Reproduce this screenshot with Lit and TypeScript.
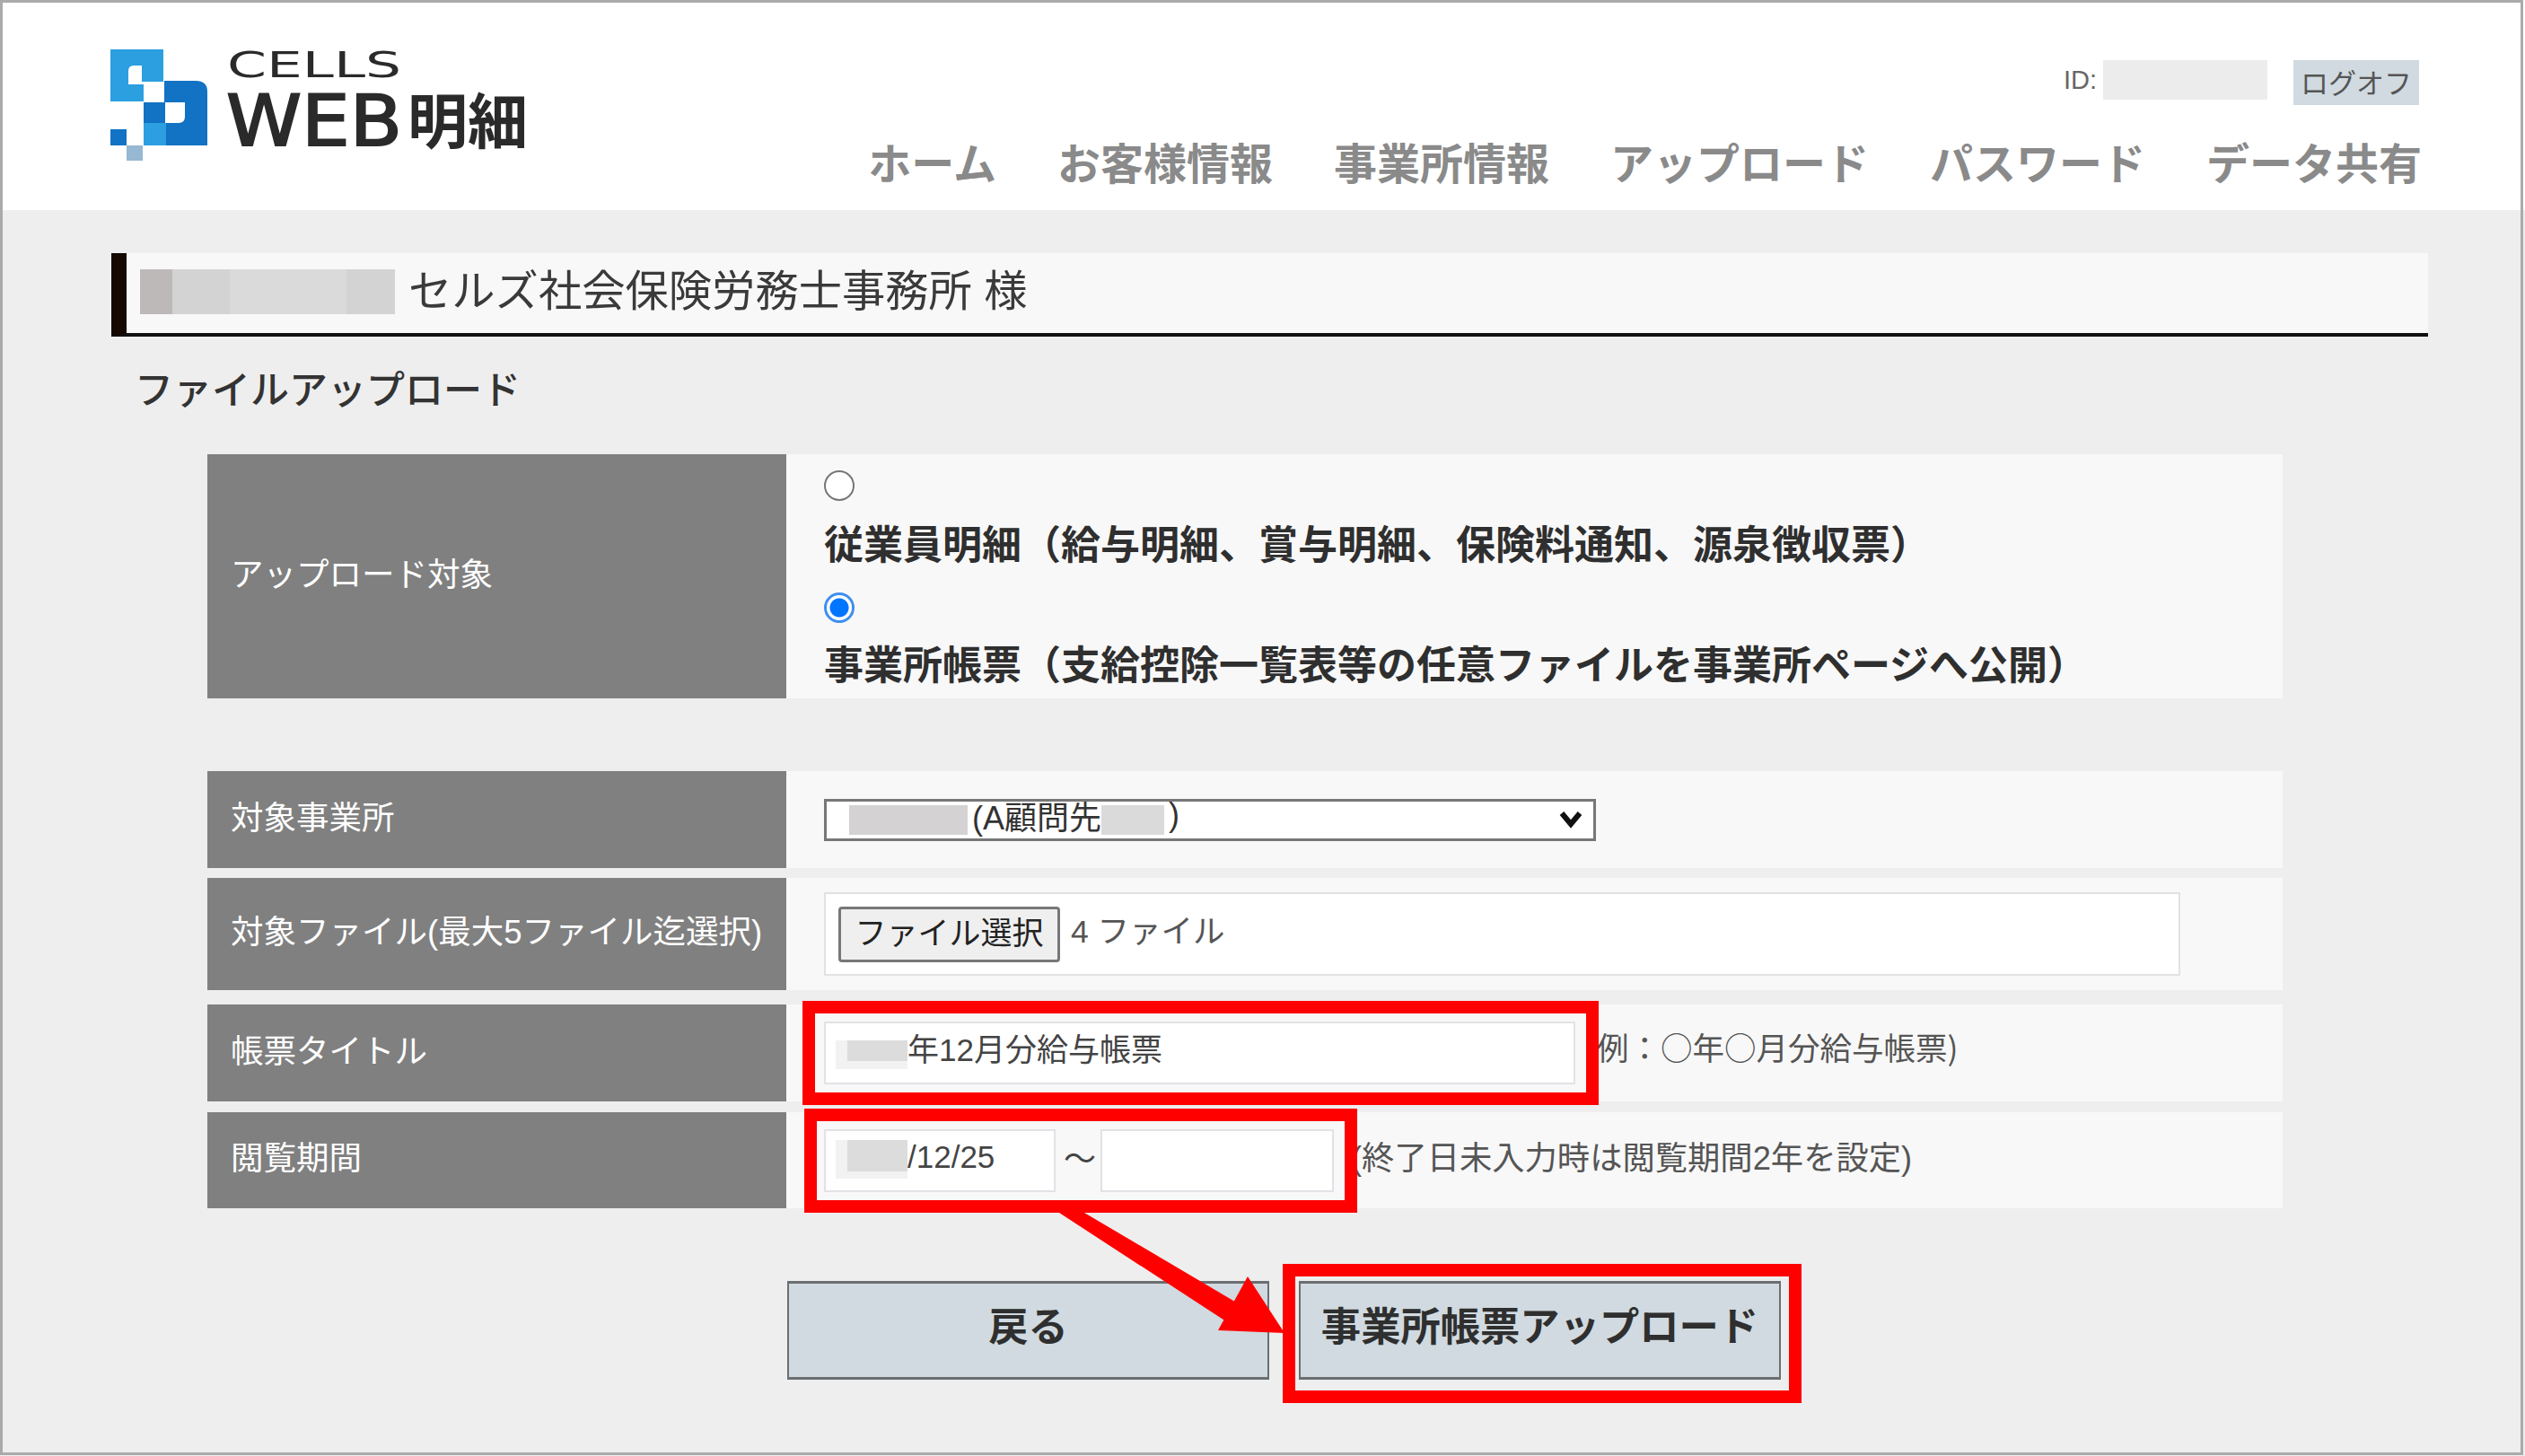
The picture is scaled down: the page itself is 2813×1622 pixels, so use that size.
import { LitElement, html, css, svg } from "lit";
import { customElement } from "lit/decorators.js";

const NAV = ["ホーム", "お客様情報", "事業所情報", "アップロード", "パスワード", "データ共有"];

@customElement("app-root")
export class AppRoot extends LitElement {
  static styles = css`
    :host {
      display: block;
      position: relative;
      width: 2813px;
      height: 1622px;
      overflow: hidden;
      background: #eeeeee;
      color: #333;
      font-family: "Liberation Sans", "Noto Sans CJK JP", sans-serif;
    }
    * { box-sizing: border-box; }
    header {
      height: 234px;
      background: #fff;
      display: flex;
      justify-content: space-between;
      padding: 54px 115px 0 123px;
    }
    .logo { display: block; width: 470px; height: 126px; overflow: visible; }
    .logo text { fill: #2a2a2a; }
    .head-right { display: flex; flex-direction: column; align-items: flex-end; padding-top: 13px; }
    .account { display: flex; align-items: flex-start; height: 50px; margin-right: 3px; font-size: 29px; color: #666; line-height: 44px; }
    .id-blur { width: 183px; height: 44px; background: #ececec; margin: 0 29px 0 0; }
    .id-text { width: 44px; white-space: nowrap; }
    .logoff { width: 140px; height: 50px; background: #d0dae0; color: #555; font-size: 31px; line-height: 54px; text-align: center; }
    nav { display: flex; gap: 68px; margin-top: 37px; font-size: 48px; font-weight: 700; color: #8a8a8a; line-height: 60px; }
    main { padding: 48px 108px 0 124px; }
    .title-bar {
      height: 93px;
      border-left: 17px solid #140800;
      border-bottom: 4px solid #111;
      background: #f8f8f8;
      display: flex;
      align-items: center;
      padding: 0 0 6px 15px;
      font-size: 48.3px;
      color: #3a3a3a;
      line-height: 60px;
      white-space: pre;
    }
    .name-blur { width: 284px; height: 50px; margin: 2px 15px 0 0; background: linear-gradient(90deg, #bdb9b8 0 36px, #d3d3d3 36px 100px, #dadada 100px 230px, #d3d3d3 230px); }
    h1 { margin: 29px 0 0 26px; height: 66px; font-size: 43px; line-height: 62px; font-weight: 500; color: #333; }
    .form { margin: 36px 0 0 107px; width: 2312px; }
    .row { display: grid; grid-template-columns: 645px 1fr; background: #f8f8f8; }
    .row > .label { background: #808080; color: #fff; font-size: 36.5px; display: flex; align-items: center; padding: 0 0 10px 26px; white-space: nowrap; }
    .row > .value { display: flex; align-items: center; padding-left: 42px; min-width: 0; white-space: nowrap; }
    .r-target { height: 272px; }
    .r-office { height: 108px; margin-top: 81px; }
    .r-file { height: 125px; margin-top: 11px; }
    .r-title { height: 108px; margin-top: 16px; }
    .r-period { height: 107px; margin-top: 12px; }
    .targets { flex-direction: column; align-items: flex-start !important; padding-top: 18px; }
    .targets input {
      appearance: none;
      display: block;
      width: 34px; height: 34px; margin: 0;
      border: 2.5px solid #767676;
      border-radius: 50%;
      background: #fff;
    }
    .targets input:checked {
      border: 3px solid #3d8ff0;
      background: radial-gradient(circle, #0075ff 0 10px, #fff 11px);
    }
    .targets .opt2 { font-size: 44px; font-weight: 700; line-height: 62px; margin-top: 17px; color: #2f2f2f; }
    .targets .opt1 { font-size: 44px; font-weight: 700; line-height: 62px; margin-top: 19px; height: 83px; color: #2f2f2f; }
    .select {
      width: 860px; height: 47px;
      background: #fff;
      border: 3px solid #777;
      display: flex; align-items: center;
      padding: 0 12px 0 25px;
      font-size: 36px; color: #333;
    }
    .select .tx { margin-bottom: 10px; }
    .blur-a { width: 132px; height: 33px; background: #d4d2d2; margin-right: 5px; }
    .blur-b { width: 70px; height: 33px; background: #dadada; margin-right: 5px; }
    .chev { margin-left: auto; width: 26px; height: 20px; display: block; }
    .file {
      width: 1511px; height: 93px;
      background: #fff;
      border: 2px solid #e2e2e6;
      display: flex; align-items: center;
      padding-left: 14px;
      font-size: 35.5px; color: #555;
    }
    .file .tx { margin-bottom: 12px; }
    .file-btn {
      width: 247px; height: 62px;
      background: #efefef;
      border: 3px solid #777;
      border-radius: 4px;
      font-size: 35px; color: #222;
      display: flex; align-items: center; justify-content: center;
      padding-bottom: 8px;
      margin-right: 12px;
    }
    .input {
      height: 70px;
      background: #fff;
      border: 2px solid #e2e2e6;
      display: flex; align-items: center;
      padding-left: 11px;
      font-size: 35px; color: #444;
    }
    .input.wide { width: 837px; }
    .input.wide .tx { margin-bottom: 14px; }
    .input.date { width: 258px; }
    .input.date .tx { margin-bottom: 8px; }
    .input.date.end { width: 260px; }
    .in-blur { width: 80px; height: 32px; margin-top: 4px; background: linear-gradient(#dcdcdc, #dcdcdc) 13px 0 / 100% 23px no-repeat, #f2f2f2; }
    .in-blur.tall { height: 43px; margin-top: -3px; background: linear-gradient(#dcdcdc, #dcdcdc) 13px 0 / 100% 35px no-repeat, #f2f2f2; }
    .tilde { width: 50px; padding-left: 4px; text-align: center; font-size: 36px; color: #444; margin-bottom: 10px; }
    .hint { font-family: "Noto Sans CJK JP", sans-serif; font-size: 35.5px; color: #555; margin: 0 0 16px 12px; }
    .hint.period { font-family: inherit; font-size: 36.3px; margin: 0 0 12px 19px; }
    .actions { display: flex; gap: 33px; margin: 81px 0 0 753px; }
    .btn {
      width: 537px; height: 110px;
      background: #d0dae0;
      border: 3px solid #6b6f72;
      border-left-width: 2px; border-right-width: 2px;
      font-size: 44.3px; font-weight: 700; color: #2f2f2f;
      display: flex; align-items: center; justify-content: center;
      padding-bottom: 14px;
    }
    .overlay { position: absolute; left: 0; top: 0; width: 2813px; height: 1622px; pointer-events: none; }
  `;

  private renderLogo() {
    return html`<svg class="logo" viewBox="0 0 470 126" aria-label="CELLS WEB明細">
      <rect x="0" y="1" width="59" height="58" fill="#2b9fe0"></rect>
      <path d="M60 36H95Q108 36 108 48V108H37V60H60Z" fill="#1272c4"></path>
      <rect x="37" y="83" width="25" height="25" fill="#2b9fe0"></rect>
      <rect x="0" y="90" width="18" height="18" fill="#1272c4"></rect>
      <rect x="18" y="108" width="18" height="17" fill="#96b8d2"></rect>
      <path d="M20 25Q20 19 26 19H35V37H60V60H83V76Q83 83 76 83H61V60H37V40H20Z" fill="#fff"></path>
      <text x="130" y="32" font-family="DejaVu Sans" font-size="39" textLength="194" lengthAdjust="spacingAndGlyphs">CELLS</text>
      <text x="129" y="108" font-family="DejaVu Sans" font-size="78" font-weight="400" stroke="#2a2a2a" stroke-width="2" textLength="196" lengthAdjust="spacingAndGlyphs">WEB</text>
      <text x="331" y="106" font-family="Noto Sans CJK JP" font-size="67" font-weight="700" textLength="134" lengthAdjust="spacingAndGlyphs">明細</text>
    </svg>`;
  }

  private renderOverlay() {
    const red = "#ff0000";
    return html`<svg class="overlay" viewBox="0 0 2813 1622">
      ${svg`
        <rect x="1.5" y="1.5" width="2808" height="1618" fill="none" stroke="#aaaaaa" stroke-width="3"></rect>
        <rect x="901" y="1122" width="873" height="102" fill="none" stroke="${red}" stroke-width="14"></rect>
        <rect x="903" y="1242" width="602" height="102" fill="none" stroke="${red}" stroke-width="14"></rect>
        <rect x="1436" y="1415" width="564" height="141" fill="none" stroke="${red}" stroke-width="14"></rect>
        <path d="M1180 1351H1208L1396 1462 1372 1476Z" fill="${red}"></path>
        <polygon points="1390,1422 1357,1482 1431,1485" fill="${red}"></polygon>
      `}
    </svg>`;
  }

  render() {
    return html`
      <header>
        ${this.renderLogo()}
        <div class="head-right">
          <div class="account">
            <span class="id-text">ID:</span><span class="id-blur"></span>
            <span class="logoff">ログオフ</span>
          </div>
          <nav>${NAV.map((n) => html`<span>${n}</span>`)}</nav>
        </div>
      </header>
      <main>
        <div class="title-bar"><span class="name-blur"></span>セルズ社会保険労務士事務所 様</div>
        <h1>ファイルアップロード</h1>
        <div class="form">
          <div class="row r-target">
            <div class="label">アップロード対象</div>
            <div class="value targets">
              <input type="radio" name="t" />
              <div class="opt1">従業員明細（給与明細、賞与明細、保険料通知、源泉徴収票）</div>
              <input type="radio" name="t" checked />
              <div class="opt2">事業所帳票（支給控除一覧表等の任意ファイルを事業所ページへ公開）</div>
            </div>
          </div>
          <div class="row r-office">
            <div class="label">対象事業所</div>
            <div class="value">
              <div class="select">
                <span class="blur-a"></span><span class="tx">(A顧問先</span><span class="blur-b"></span><span class="tx">)</span>
                <svg class="chev" viewBox="0 0 26 20"><path d="M3 3L13 15 23 3" fill="none" stroke="#111" stroke-width="6"></path></svg>
              </div>
            </div>
          </div>
          <div class="row r-file">
            <div class="label">対象ファイル(最大5ファイル迄選択)</div>
            <div class="value">
              <div class="file"><span class="file-btn">ファイル選択</span><span class="tx">4 ファイル</span></div>
            </div>
          </div>
          <div class="row r-title">
            <div class="label">帳票タイトル</div>
            <div class="value">
              <div class="input wide"><span class="in-blur"></span><span class="tx">年12月分給与帳票</span></div>
              <span class="hint">(例：○年○月分給与帳票)</span>
            </div>
          </div>
          <div class="row r-period">
            <div class="label">閲覧期間</div>
            <div class="value">
              <div class="input date"><span class="in-blur tall"></span><span class="tx">/12/25</span></div>
              <span class="tilde">～</span>
              <div class="input date end"></div>
              <span class="hint period">(終了日未入力時は閲覧期間2年を設定)</span>
            </div>
          </div>
        </div>
        <div class="actions">
          <div class="btn">戻る</div>
          <div class="btn">事業所帳票アップロード</div>
        </div>
      </main>
      ${this.renderOverlay()}
    `;
  }
}
